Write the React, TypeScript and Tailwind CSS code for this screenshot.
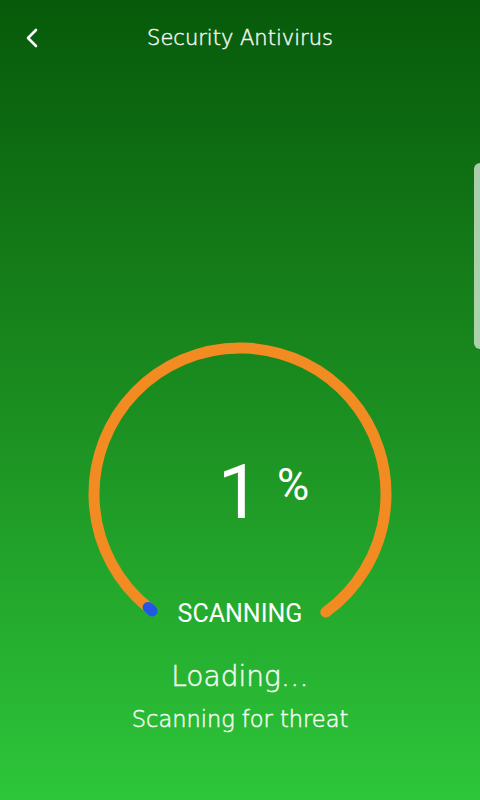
import React from 'react';

const Gauge: React.FC<{ value: number }> = ({ value }) => {
    const cx = 240;
    const cy = 494;
    const r = 146;
    const startDeg = 129; // left end, measured clockwise from +x (svg coords)
    const endDeg = 54;
    const pt = (deg: number) => {
        const a = (deg * Math.PI) / 180;
        return [cx + r * Math.cos(a), cy + r * Math.sin(a)];
    };
    const [sx, sy] = pt(startDeg);
    const [ex, ey] = pt(endDeg);
    return (
        <svg width="480" height="300" viewBox="0 340 480 300" className="block">
            <path
                d={`M ${sx} ${sy} A ${r} ${r} 0 1 1 ${ex} ${ey}`}
                fill="none"
                stroke="#f28c22"
                strokeWidth="11"
                strokeLinecap="round"
            />
            <line
                x1={sx}
                y1={sy}
                x2={sx + 4}
                y2={sy + 3.5}
                stroke="#2257e6"
                strokeWidth="11"
                strokeLinecap="round"
            />
            <text x="239" y="518" textAnchor="middle" fill="#fff" fontSize="76" fontFamily="Roboto, sans-serif" fontWeight="400">
                {value}
            </text>
            <text x="293" y="500" textAnchor="middle" fill="#fff" fontSize="44" fontFamily="Roboto, sans-serif" fontWeight="400">
                %
            </text>
        </svg>
    );
};

export default function App() {
    return (
        <div className="relative w-[480px] h-[800px] overflow-hidden bg-gradient-to-b from-[#075a0a] via-[#1b8d20] to-[#2dc63a] text-white">
            {/* Header */}
            <div className="relative h-[78px] flex items-center justify-center">
                <button className="absolute left-[22px] top-[26px] w-[20px] h-[24px] flex items-center justify-center">
                    <svg width="14" height="20" viewBox="0 0 14 20">
                        <path d="M11 2 L3 10 L11 18" fill="none" stroke="#fff" strokeWidth="2.6" strokeLinecap="round" strokeLinejoin="round" />
                    </svg>
                </button>
                <h1 className="text-[21px] font-['DejaVu_Sans',sans-serif] font-extralight text-[#eef5ee] [-webkit-text-stroke:0.5px_#eef5ee]">Security Antivirus</h1>
            </div>

            {/* scrollbar */}
            <div className="absolute right-0 top-[163px] w-[6px] h-[186px] rounded-l-full bg-[#cfe6cf]/80" />

            <div className="mt-[262px]">
                <Gauge value={1} />
            </div>

            <div className="-mt-[40px] flex flex-col items-center">
                <div className="text-[25px] leading-[28px] font-['Roboto',sans-serif] text-white">SCANNING</div>
                <div className="mt-[32px] text-[28px] leading-[34px] font-['DejaVu_Sans',sans-serif] font-extralight text-[#f2faf2] [-webkit-text-stroke:0.5px_#f2faf2]">Loading…</div>
                <div className="mt-[11px] text-[22.5px] leading-[28px] font-['DejaVu_Sans',sans-serif] font-extralight text-[#f2faf2] [-webkit-text-stroke:0.5px_#f2faf2]">Scanning for threat</div>
            </div>
        </div>
    );
}
